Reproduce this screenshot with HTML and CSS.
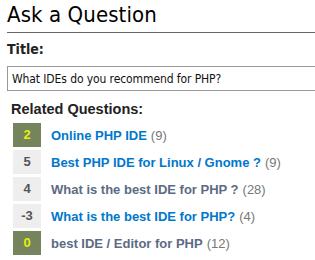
FILE: index.html
```html
<!DOCTYPE html>
<html lang="en">
<head>
  <meta charset="UTF-8">
  <title>Ask a Question</title>
  <link rel="stylesheet" href="styles.css">
</head>
<body>
  <h1>Ask a Question</h1>

  <label for="title" class="field-label">Title:</label>
  <input id="title" type="text" value="What IDEs do you recommend for PHP?" />

  <div class="related">
    <h2>Related Questions:</h2>
    <ul class="related-list">
      <li class="related-item">
        <span class="votes votes-good">2</span>
        <a href="#">Online PHP IDE</a>
        <span class="count">(9)</span>
      </li>
      <li class="related-item">
        <span class="votes">5</span>
        <a href="#">Best PHP IDE for Linux / Gnome ?</a>
        <span class="count">(9)</span>
      </li>
      <li class="related-item">
        <span class="votes">4</span>
        <a href="#" class="visited">What is the best IDE for PHP ?</a>
        <span class="count">(28)</span>
      </li>
      <li class="related-item">
        <span class="votes">-3</span>
        <a href="#">What is the best IDE for PHP?</a>
        <span class="count">(4)</span>
      </li>
      <li class="related-item">
        <span class="votes votes-good">0</span>
        <a href="#" class="visited">best IDE / Editor for PHP</a>
        <span class="count">(12)</span>
      </li>
    </ul>
  </div>
</body>
</html>
```

FILE: styles.css
```css
body {
  margin: 0;
  padding: 0 0 0 7px;
  font-family: "DejaVu Sans Condensed", "DejaVu Sans", sans-serif;
  color: #000;
  background: #fff;
  overflow: hidden;
}

h1 {
  margin: 0;
  padding: 2px 0 4px;
  font-size: 22px;
  font-weight: normal;
  line-height: 26px;
  letter-spacing: 0.1px;
  border-bottom: 1px solid #666;
}

.field-label {
  display: block;
  margin: 8px 0;
  font-size: 14px;
  font-weight: bold;
  line-height: 17px;
  color: #222;
}

input[type="text"] {
  display: block;
  width: 330px;
  height: 25px;
  margin: 0;
  padding: 0 4px;
  font-family: "DejaVu Sans Condensed", "DejaVu Sans", sans-serif;
  font-size: 12px;
  letter-spacing: -0.1px;
  color: #111;
  border: 1px solid #999;
  box-sizing: border-box;
  outline: none;
}

.related {
  padding-left: 4px;
  font-family: "Liberation Sans", Arial, sans-serif;
}

.related h2 {
  margin: 10px 0 5px;
  font-size: 14.5px;
  line-height: 17px;
  color: #222;
}

.related-list {
  list-style: none;
  margin: 0;
  padding: 0 0 0 2px;
}

.related-item {
  display: flex;
  align-items: center;
  gap: 4px;
  height: 24px;
  margin-bottom: 3px;
  font-size: 13px;
  white-space: nowrap;
}

.votes {
  width: 28px;
  height: 24px;
  margin-right: 6px;
  line-height: 24px;
  text-align: center;
  font-weight: bold;
  color: #555;
  background: #eee;
}

.votes-good {
  background: #75845c;
  color: #e3f00b;
}

.related-item a {
  font-weight: bold;
  color: #0077cc;
  text-decoration: none;
}

.related-item a.visited {
  color: #5b6b85;
}

.count {
  color: #777;
}
```
